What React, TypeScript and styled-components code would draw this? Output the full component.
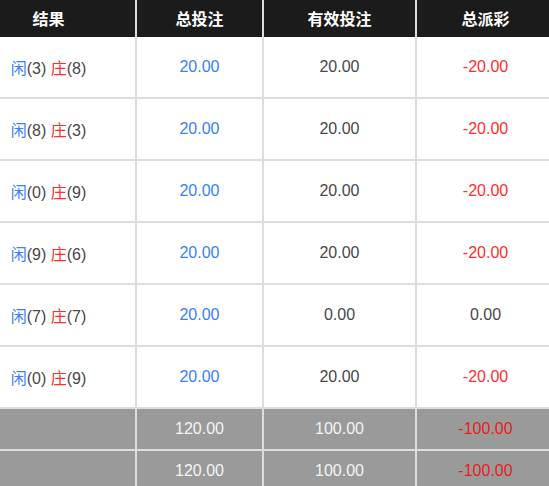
import * as React from 'react';
import styled, { createGlobalStyle } from 'styled-components';

const GlobalStyle = createGlobalStyle`
  html, body {
    margin: 0;
    padding: 0;
    background: #ffffff;
    overflow: hidden;
  }
  body {
    font-family: 'Liberation Sans', Arial, 'Noto Sans CJK SC', sans-serif;
  }
`;

const palette = {
  head: '#1b1b1b',
  line: '#dddddd',
  text: '#474747',
  blue: '#3a80f8',
  red: '#ff2d2d',
  footRed: '#ea1c1c',
  foot: '#9a9a9a',
};

const Wrapper = styled.div`
  width: 549px;
  overflow: hidden;
`;

const Table = styled.table`
  margin-left: -38px;
  border-collapse: separate;
  border-spacing: 0;
  table-layout: fixed;
  width: 592px;
  font-size: 16px;
`;

const HeadCell = styled.th`
  height: 37px;
  padding: 0 0 2px;
  background: ${palette.head};
  color: #ffffff;
  font-weight: bold;
  font-size: 16px;
  text-align: center;
  border-right: 2px solid ${palette.line};
  box-sizing: border-box;
  &:last-child {
    border-right: none;
  }
`;

const Cell = styled.td<{ footer?: boolean }>`
  height: ${props => (props.footer ? '42px' : '62px')};
  padding: 0 0 ${props => (props.footer ? '0' : '1px')};
  box-sizing: border-box;
  text-align: center;
  color: ${props => (props.footer ? '#f4f4f4' : palette.text)};
  background: ${props => (props.footer ? palette.foot : '#ffffff')};
  border-right: 2px solid ${palette.line};
  border-bottom: 2px solid ${palette.line};
  &:last-child {
    border-right: none;
  }
`;

const Tone = styled.span<{ tone: 'blue' | 'red' | 'footRed' }>`
  color: ${props => palette[props.tone]};
`;

const results = [
  { player: 3, banker: 8, bet: '20.00', valid: '20.00', win: '-20.00' },
  { player: 8, banker: 3, bet: '20.00', valid: '20.00', win: '-20.00' },
  { player: 0, banker: 9, bet: '20.00', valid: '20.00', win: '-20.00' },
  { player: 9, banker: 6, bet: '20.00', valid: '20.00', win: '-20.00' },
  { player: 7, banker: 7, bet: '20.00', valid: '0.00', win: '0.00' },
  { player: 0, banker: 9, bet: '20.00', valid: '20.00', win: '-20.00' },
];

const totals = [
  { bet: '120.00', valid: '100.00', win: '-100.00' },
  { bet: '120.00', valid: '100.00', win: '-100.00' },
];

const App: React.FC = () => {
  return (
    <Wrapper>
      <GlobalStyle />
      <Table>
        <colgroup>
          <col style={{ width: 175 }} />
          <col style={{ width: 127 }} />
          <col style={{ width: 153 }} />
          <col style={{ width: 137 }} />
        </colgroup>
        <thead>
          <tr>
            <HeadCell>结果</HeadCell>
            <HeadCell>总投注</HeadCell>
            <HeadCell>有效投注</HeadCell>
            <HeadCell>总派彩</HeadCell>
          </tr>
        </thead>
        <tbody>
          {results.map((r, i) => (
            <tr key={i}>
              <Cell>
                <Tone tone="blue">闲</Tone>({r.player}) <Tone tone="red">庄</Tone>(
                {r.banker})
              </Cell>
              <Cell>
                <Tone tone="blue">{r.bet}</Tone>
              </Cell>
              <Cell>{r.valid}</Cell>
              <Cell>
                {r.win.startsWith('-') ? <Tone tone="red">{r.win}</Tone> : r.win}
              </Cell>
            </tr>
          ))}
          {totals.map((t, i) => (
            <tr key={'t' + i}>
              <Cell footer />
              <Cell footer>{t.bet}</Cell>
              <Cell footer>{t.valid}</Cell>
              <Cell footer>
                <Tone tone="footRed">{t.win}</Tone>
              </Cell>
            </tr>
          ))}
        </tbody>
      </Table>
    </Wrapper>
  );
};

export default App;
